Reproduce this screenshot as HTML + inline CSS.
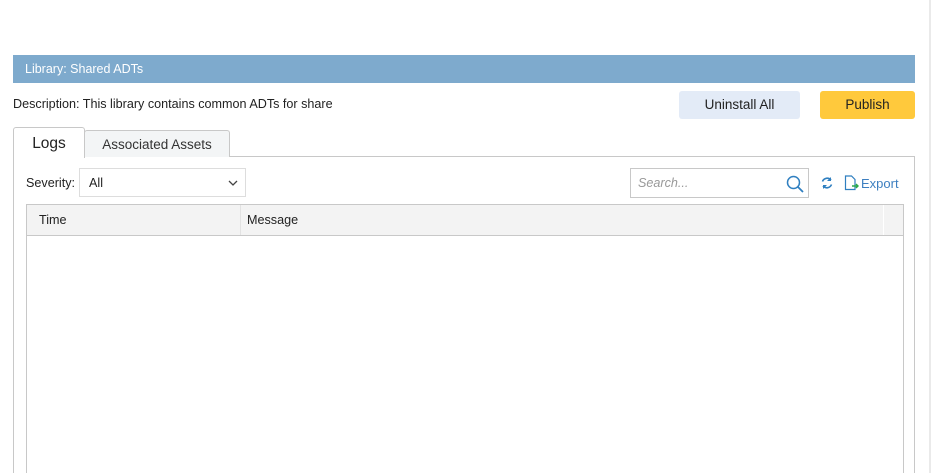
<!DOCTYPE html>
<html><head><style>
*{box-sizing:border-box;margin:0;padding:0}
html,body{width:931px;height:473px;overflow:hidden}
body{background:#fff;font-family:"Liberation Sans",sans-serif;position:relative;color:#222}
.a{position:absolute}
</style></head><body>
<div class="a" style="left:929px;top:0;width:2px;height:473px;background:#eaeaea"></div>
<div class="a" style="left:13px;top:55px;width:902px;height:28px;background:#7eaacd;color:#fff;font-size:12.5px;line-height:28px;padding-left:12px">Library: Shared ADTs</div>
<div class="a" style="left:13px;top:97px;font-size:12.6px">Description: This library contains common ADTs for share</div>
<div class="a" style="left:679px;top:91px;width:121px;height:28px;background:#e3ebf7;border-radius:3px;font-size:13.5px;line-height:28px;text-align:center">Uninstall All</div>
<div class="a" style="left:820px;top:91px;width:95px;height:28px;background:#ffc93c;border-radius:3px;font-size:13.5px;line-height:28px;text-align:center">Publish</div>
<div class="a" style="left:13px;top:156px;width:902px;height:340px;border:1px solid #c8c8c8"></div>
<div class="a" style="left:84px;top:130px;width:146px;height:27px;background:#f3f5f6;border:1px solid #c8c8c8;border-bottom:none;border-radius:3px 3px 0 0;font-size:13.5px;line-height:28px;text-align:center;color:#333">Associated Assets</div>
<div class="a" style="left:13px;top:127px;width:72px;height:31px;background:#fff;border:1px solid #c8c8c8;border-bottom:none;border-radius:3px 3px 0 0;font-size:15.5px;line-height:31px;text-align:center">Logs</div>
<div class="a" style="left:26px;top:176px;font-size:12.6px">Severity:</div>
<div class="a" style="left:79px;top:168px;width:167px;height:29px;border:1px solid #ddd;font-size:12.6px;line-height:28px;padding-left:9px">All
<svg class="a" style="left:148px;top:11px" width="10" height="7"><path d="M1 1l4 4 4-4" fill="none" stroke="#444" stroke-width="1.3"/></svg></div>
<div class="a" style="left:630px;top:168px;width:179px;height:30px;border:1px solid #c8c8c8;font-size:12.6px;line-height:28px;padding-left:7px;color:#999;font-style:italic">Search...
<svg class="a" style="left:155px;top:6px" width="18" height="18"><circle cx="7.5" cy="7.5" r="6" fill="none" stroke="#2f7fc0" stroke-width="1.5"/><path d="M12 12l5 5" stroke="#2f7fc0" stroke-width="1.8"/></svg></div>
<svg class="a" style="left:820px;top:176px" width="14" height="14"><path d="M2.5 5.5A5 5 0 0 1 11 4M11.5 8.5A5 5 0 0 1 3 10" fill="none" stroke="#2f7fc0" stroke-width="1.6"/><path d="M11 1v4H7z" fill="#2f7fc0"/><path d="M3 13V9h4z" fill="#2f7fc0"/></svg>
<svg class="a" style="left:844px;top:175px" width="15" height="16"><path d="M1.5 1h6l3.5 3.5V14.5h-9.5z" fill="none" stroke="#2f7fc0" stroke-width="1.2"/><path d="M8 11h6M12 9l2 2-2 2" stroke="#2aa84a" stroke-width="1.4" fill="none"/></svg>
<div class="a" style="left:861px;top:176px;font-size:13px;color:#3d7fc0">Export</div>
<div class="a" style="left:26px;top:204px;width:878px;height:290px;border:1px solid #c8c8c8"></div>
<div class="a" style="left:27px;top:205px;width:876px;height:31px;background:#f3f3f3;border-bottom:1px solid #c8c8c8"></div>
<div class="a" style="left:240px;top:205px;width:1px;height:30px;background:#e2e2e2"></div>
<div class="a" style="left:883px;top:205px;width:1px;height:30px;background:#fff"></div>
<div class="a" style="left:39px;top:212px;font-size:12.6px;line-height:16px">Time</div>
<div class="a" style="left:247px;top:212px;font-size:12.6px;line-height:16px">Message</div>
</body></html>
